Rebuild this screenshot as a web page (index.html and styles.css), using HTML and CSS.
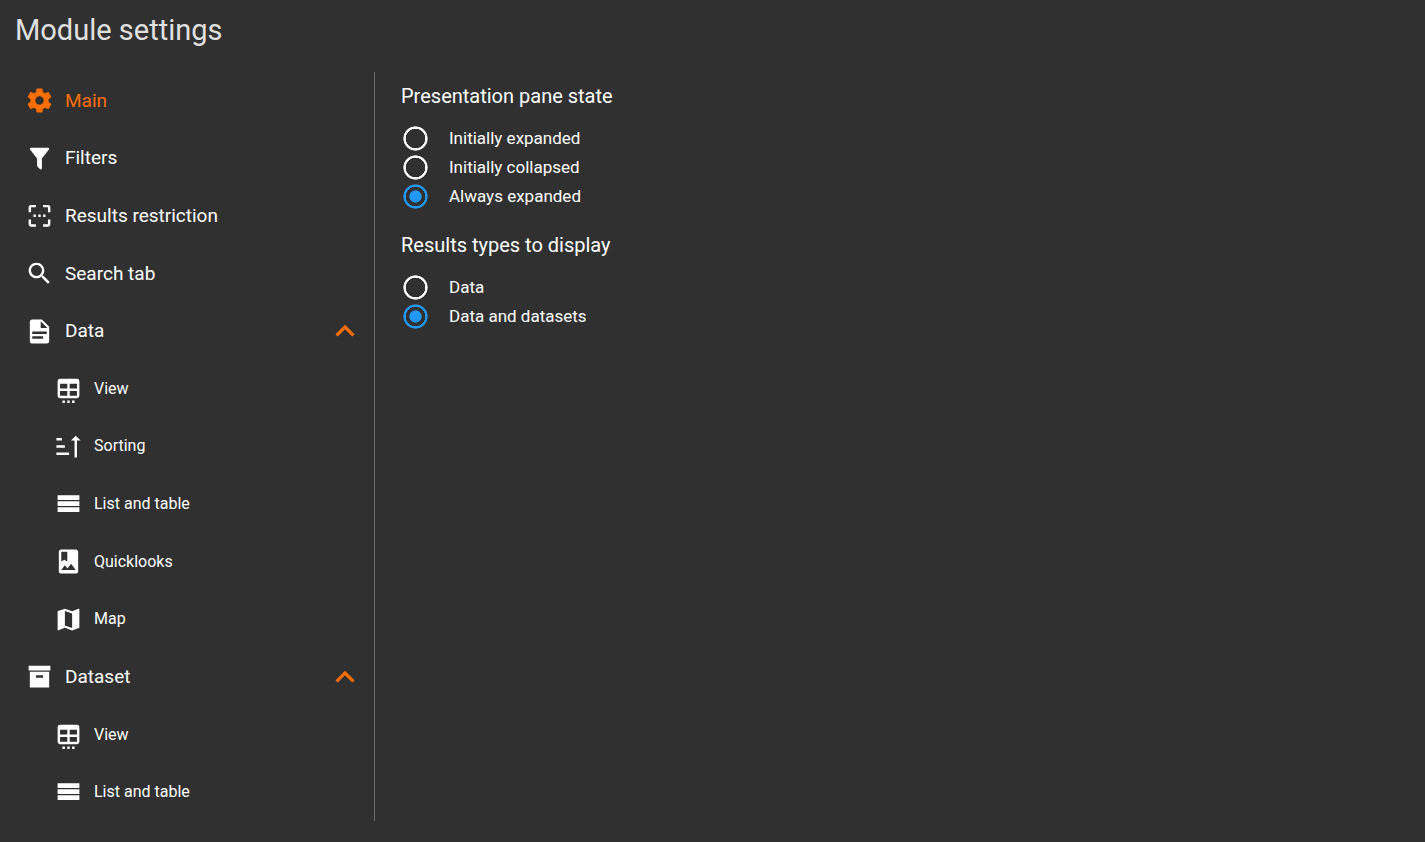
FILE: index.html
```html
<!DOCTYPE html>
<html lang="en">
<head>
<meta charset="utf-8">
<meta name="viewport" content="width=device-width, initial-scale=1">
<title>Module settings</title>
<link rel="stylesheet" href="styles.css">
</head>
<body>
<svg class="sprite" aria-hidden="true">
  <symbol id="cog" viewBox="0 0 24 24"><path d="M12,15.5A3.5,3.5 0 0,1 8.5,12A3.5,3.5 0 0,1 12,8.5A3.5,3.5 0 0,1 15.5,12A3.5,3.5 0 0,1 12,15.5M19.43,12.97C19.47,12.65 19.5,12.33 19.5,12C19.5,11.67 19.47,11.34 19.43,11L21.54,9.37C21.73,9.22 21.78,8.95 21.66,8.73L19.66,5.27C19.54,5.05 19.27,4.96 19.05,5.05L16.56,6.05C16.04,5.66 15.5,5.32 14.87,5.07L14.5,2.42C14.46,2.18 14.25,2 14,2H10C9.75,2 9.54,2.18 9.5,2.42L9.13,5.07C8.5,5.32 7.96,5.66 7.44,6.05L4.95,5.05C4.73,4.96 4.46,5.05 4.34,5.27L2.34,8.73C2.21,8.95 2.27,9.22 2.46,9.37L4.57,11C4.53,11.34 4.5,11.67 4.5,12C4.5,12.33 4.53,12.65 4.57,12.97L2.46,14.63C2.27,14.78 2.21,15.05 2.34,15.27L4.34,18.73C4.46,18.95 4.73,19.03 4.95,18.95L7.44,17.94C7.96,18.34 8.5,18.68 9.13,18.93L9.5,21.58C9.54,21.82 9.75,22 10,22H14C14.25,22 14.46,21.82 14.5,21.58L14.87,18.93C15.5,18.67 16.04,18.34 16.56,17.94L19.05,18.95C19.27,19.03 19.54,18.95 19.66,18.73L21.66,15.27C21.78,15.05 21.73,14.78 21.54,14.63L19.43,12.97Z"/></symbol>
  <symbol id="funnel" viewBox="0 0 24 24"><path d="M14,12V19.88C14.04,20.18 13.94,20.5 13.71,20.71C13.32,21.1 12.69,21.1 12.3,20.71L10.29,18.7C10.06,18.47 9.96,18.16 10,17.87V12H9.97L4.21,4.62C3.87,4.19 3.95,3.56 4.38,3.22C4.57,3.08 4.78,3 5,3H19C19.22,3 19.43,3.08 19.62,3.22C20.05,3.56 20.13,4.19 19.79,4.62L14.03,12H14Z"/></symbol>
  <symbol id="restrict" viewBox="0 0.6 24 24"><path d="M5,15H3V19A2,2 0 0,0 5,21H9V19H5M5,5H9V3H5A2,2 0 0,0 3,5V9H5M19,3H15V5H19V9H21V5A2,2 0 0,0 19,3M19,19H15V21H19A2,2 0 0,0 21,19V15H19M7,11H9V13H7M11,11H13V13H11M15,11H17V13H15"/></symbol>
  <symbol id="search" viewBox="0 0 24 24"><path d="M15.5 14h-.79l-.28-.27C15.41 12.59 16 11.11 16 9.5 16 5.91 13.09 3 9.5 3S3 5.91 3 9.5 5.91 16 9.5 16c1.61 0 3.09-.59 4.23-1.57l.27.28v.79l5 4.99L20.49 19l-4.99-5zm-6 0C7.01 14 5 11.99 5 9.5S7.01 5 9.5 5 14 7.01 14 9.5 11.99 14 9.5 14z"/></symbol>
  <symbol id="document" viewBox="0 0 24 24"><path d="M13,9H18.5L13,3.5V9M6,2H14L20,8V20A2,2 0 0,1 18,22H6C4.89,22 4,21.1 4,20V4C4,2.89 4.89,2 6,2M15,18V16H6V18H15M18,14V12H6V14H18Z"/></symbol>
  <symbol id="table" viewBox="0 0 24 24"><path d="M5,4H19A2,2 0 0,1 21,6V18A2,2 0 0,1 19,20H5A2,2 0 0,1 3,18V6A2,2 0 0,1 5,4M5,8V12H11V8H5M13,8V12H19V8H13M5,14V18H11V14H5M13,14V18H19V14H13M7,22H9V24H7M11,22H13V24H11M15,22H17V24H15"/></symbol>
  <symbol id="sort" viewBox="0 0 24 24"><path d="M2,5H6.5V7H2M2,11H9V13H2M2,17H12.5V19H2M18,3L22,7H19V21H17V7H14Z"/></symbol>
  <symbol id="rows" viewBox="0 0.7 24 24"><path d="M3,5H21V9H3M3,10H21V14H3M3,15H21V19H3"/></symbol>
  <symbol id="album" viewBox="0 0 24 24"><path d="M18 2H6c-1.1 0-2 .9-2 2v16c0 1.1.9 2 2 2h12c1.1 0 2-.9 2-2V4c0-1.1-.9-2-2-2zM6 4h5v8l-2.5-1.5L6 12V4zm0 15l3-3.86 2.14 2.58 3-3.86L18 19H6z"/></symbol>
  <symbol id="map" viewBox="0 0 24 24"><path d="M20.5 3l-.16.03L15 5.1 9 3 3.36 4.9c-.21.07-.36.25-.36.48V20.5c0 .28.22.5.5.5l.16-.03L9 18.9l6 2.1 5.64-1.9c.21-.07.36-.25.36-.48V3.5c0-.28-.22-.5-.5-.5zM15 19l-6-2.11V5l6 2.11V19z"/></symbol>
  <symbol id="archive" viewBox="0 0 24 24"><path d="M3,3H21V7H3V3M4,8H20V21H4V8M9.5,11A0.5,0.5 0 0,0 9,11.5V13H15V11.5A0.5,0.5 0 0,0 14.5,11H9.5Z"/></symbol>
  <symbol id="chevron" viewBox="0 0 24 24"><path d="M12 8l-6 6 1.41 1.41L12 10.83l4.59 4.58L18 14z"/></symbol>
</svg>
<header class="page-header"><h1 class="page-title">Module settings</h1></header>
<div class="layout">
  <nav class="nav" aria-label="Settings sections">
    <ul class="nav-list">
      <li class="nav-row"><a class="nav-item nav-item-active" href="#main" aria-current="page"><svg class="icon"><use href="#cog"/></svg><span class="nav-label">Main</span></a></li>
      <li class="nav-row"><a class="nav-item" href="#filters"><svg class="icon"><use href="#funnel"/></svg><span class="nav-label">Filters</span></a></li>
      <li class="nav-row"><a class="nav-item" href="#restriction"><svg class="icon"><use href="#restrict"/></svg><span class="nav-label">Results restriction</span></a></li>
      <li class="nav-row"><a class="nav-item" href="#search-tab"><svg class="icon"><use href="#search"/></svg><span class="nav-label">Search tab</span></a></li>
      <li class="nav-row"><button class="nav-item" type="button" aria-expanded="true"><svg class="icon"><use href="#document"/></svg><span class="nav-label">Data</span><svg class="chevron"><use href="#chevron"/></svg></button></li>
      <li class="nav-row"><a class="nav-item nav-item-nested" href="#data-view"><svg class="icon"><use href="#table"/></svg><span class="nav-label">View</span></a></li>
      <li class="nav-row"><a class="nav-item nav-item-nested" href="#data-sorting"><svg class="icon"><use href="#sort"/></svg><span class="nav-label">Sorting</span></a></li>
      <li class="nav-row"><a class="nav-item nav-item-nested" href="#data-list"><svg class="icon"><use href="#rows"/></svg><span class="nav-label">List and table</span></a></li>
      <li class="nav-row"><a class="nav-item nav-item-nested" href="#data-quicklooks"><svg class="icon"><use href="#album"/></svg><span class="nav-label">Quicklooks</span></a></li>
      <li class="nav-row"><a class="nav-item nav-item-nested" href="#data-map"><svg class="icon"><use href="#map"/></svg><span class="nav-label">Map</span></a></li>
      <li class="nav-row"><button class="nav-item" type="button" aria-expanded="true"><svg class="icon"><use href="#archive"/></svg><span class="nav-label">Dataset</span><svg class="chevron"><use href="#chevron"/></svg></button></li>
      <li class="nav-row"><a class="nav-item nav-item-nested" href="#dataset-view"><svg class="icon"><use href="#table"/></svg><span class="nav-label">View</span></a></li>
      <li class="nav-row"><a class="nav-item nav-item-nested" href="#dataset-list"><svg class="icon"><use href="#rows"/></svg><span class="nav-label">List and table</span></a></li>
    </ul>
  </nav>
  <main class="content">
    <fieldset class="group">
      <legend class="group-title">Presentation pane state</legend>
      <label class="option"><input class="radio" type="radio" name="pane">Initially expanded</label>
      <label class="option"><input class="radio" type="radio" name="pane">Initially collapsed</label>
      <label class="option"><input class="radio" type="radio" name="pane" checked>Always expanded</label>
    </fieldset>
    <fieldset class="group">
      <legend class="group-title">Results types to display</legend>
      <label class="option"><input class="radio" type="radio" name="types">Data</label>
      <label class="option"><input class="radio" type="radio" name="types" checked>Data and datasets</label>
    </fieldset>
  </main>
</div>
</body>
</html>
```
FILE: styles.css
```css
* {
  box-sizing: border-box;
}

body {
  margin: 0;
  min-height: 100vh;
  display: flex;
  flex-direction: column;
  background: #303030;
  color: #fff;
  font-family: Roboto, "Liberation Sans", sans-serif;
}

.sprite {
  display: none;
}

.page-header {
  padding: 12px 15px 24px;
}

.page-title {
  margin: 0;
  font-size: 29px;
  line-height: 36px;
  font-weight: 400;
  color: #e0e0e0;
}

.layout {
  flex: 1;
  display: flex;
  padding-bottom: 21px;
}

.nav {
  display: flex;
  width: 375px;
  flex-shrink: 0;
  border-right: 1px solid #6e6e6e;
}

.nav-list {
  flex: 1;
  display: grid;
  grid-auto-rows: 1fr;
  margin: 0;
  padding: 0;
  list-style: none;
}

.nav-row {
  display: flex;
  min-height: 48px;
}

.nav-item {
  flex: 1;
  display: flex;
  align-items: center;
  gap: 11px;
  padding: 0 10px 0 25px;
  border: 0;
  background: none;
  color: inherit;
  font: inherit;
  font-size: 19px;
  line-height: 24px;
  text-align: left;
  text-decoration: none;
  cursor: pointer;
}

.nav-item-nested {
  padding-left: 54px;
  font-size: 16px;
}

.nav-item-active {
  color: #ff6e00;
}

.nav-label {
  flex: 1;
}

.icon {
  width: 29px;
  height: 29px;
  fill: currentColor;
}

.chevron {
  width: 38px;
  height: 38px;
  fill: #ff6e00;
}

.content {
  flex: 1;
  padding: 12px 26px;
}

.group {
  margin: 0 0 22px;
  padding: 0;
  border: 0;
}

.group-title {
  margin-bottom: 16px;
  padding: 0;
  font-size: 20px;
  line-height: 24px;
}

.option {
  display: flex;
  align-items: center;
  gap: 21px;
  padding-left: 2px;
  font-size: 17px;
  line-height: 29px;
}

.radio {
  appearance: none;
  width: 25px;
  height: 25px;
  margin: 0;
  border-radius: 50%;
  background: radial-gradient(closest-side, transparent 76%, #fff 80%, #fff 94%, transparent 100%);
}

.radio:checked {
  background: radial-gradient(closest-side, #2196f3 46%, transparent 52%, transparent 76%, #2196f3 80%, #2196f3 94%, transparent 100%);
}
```
